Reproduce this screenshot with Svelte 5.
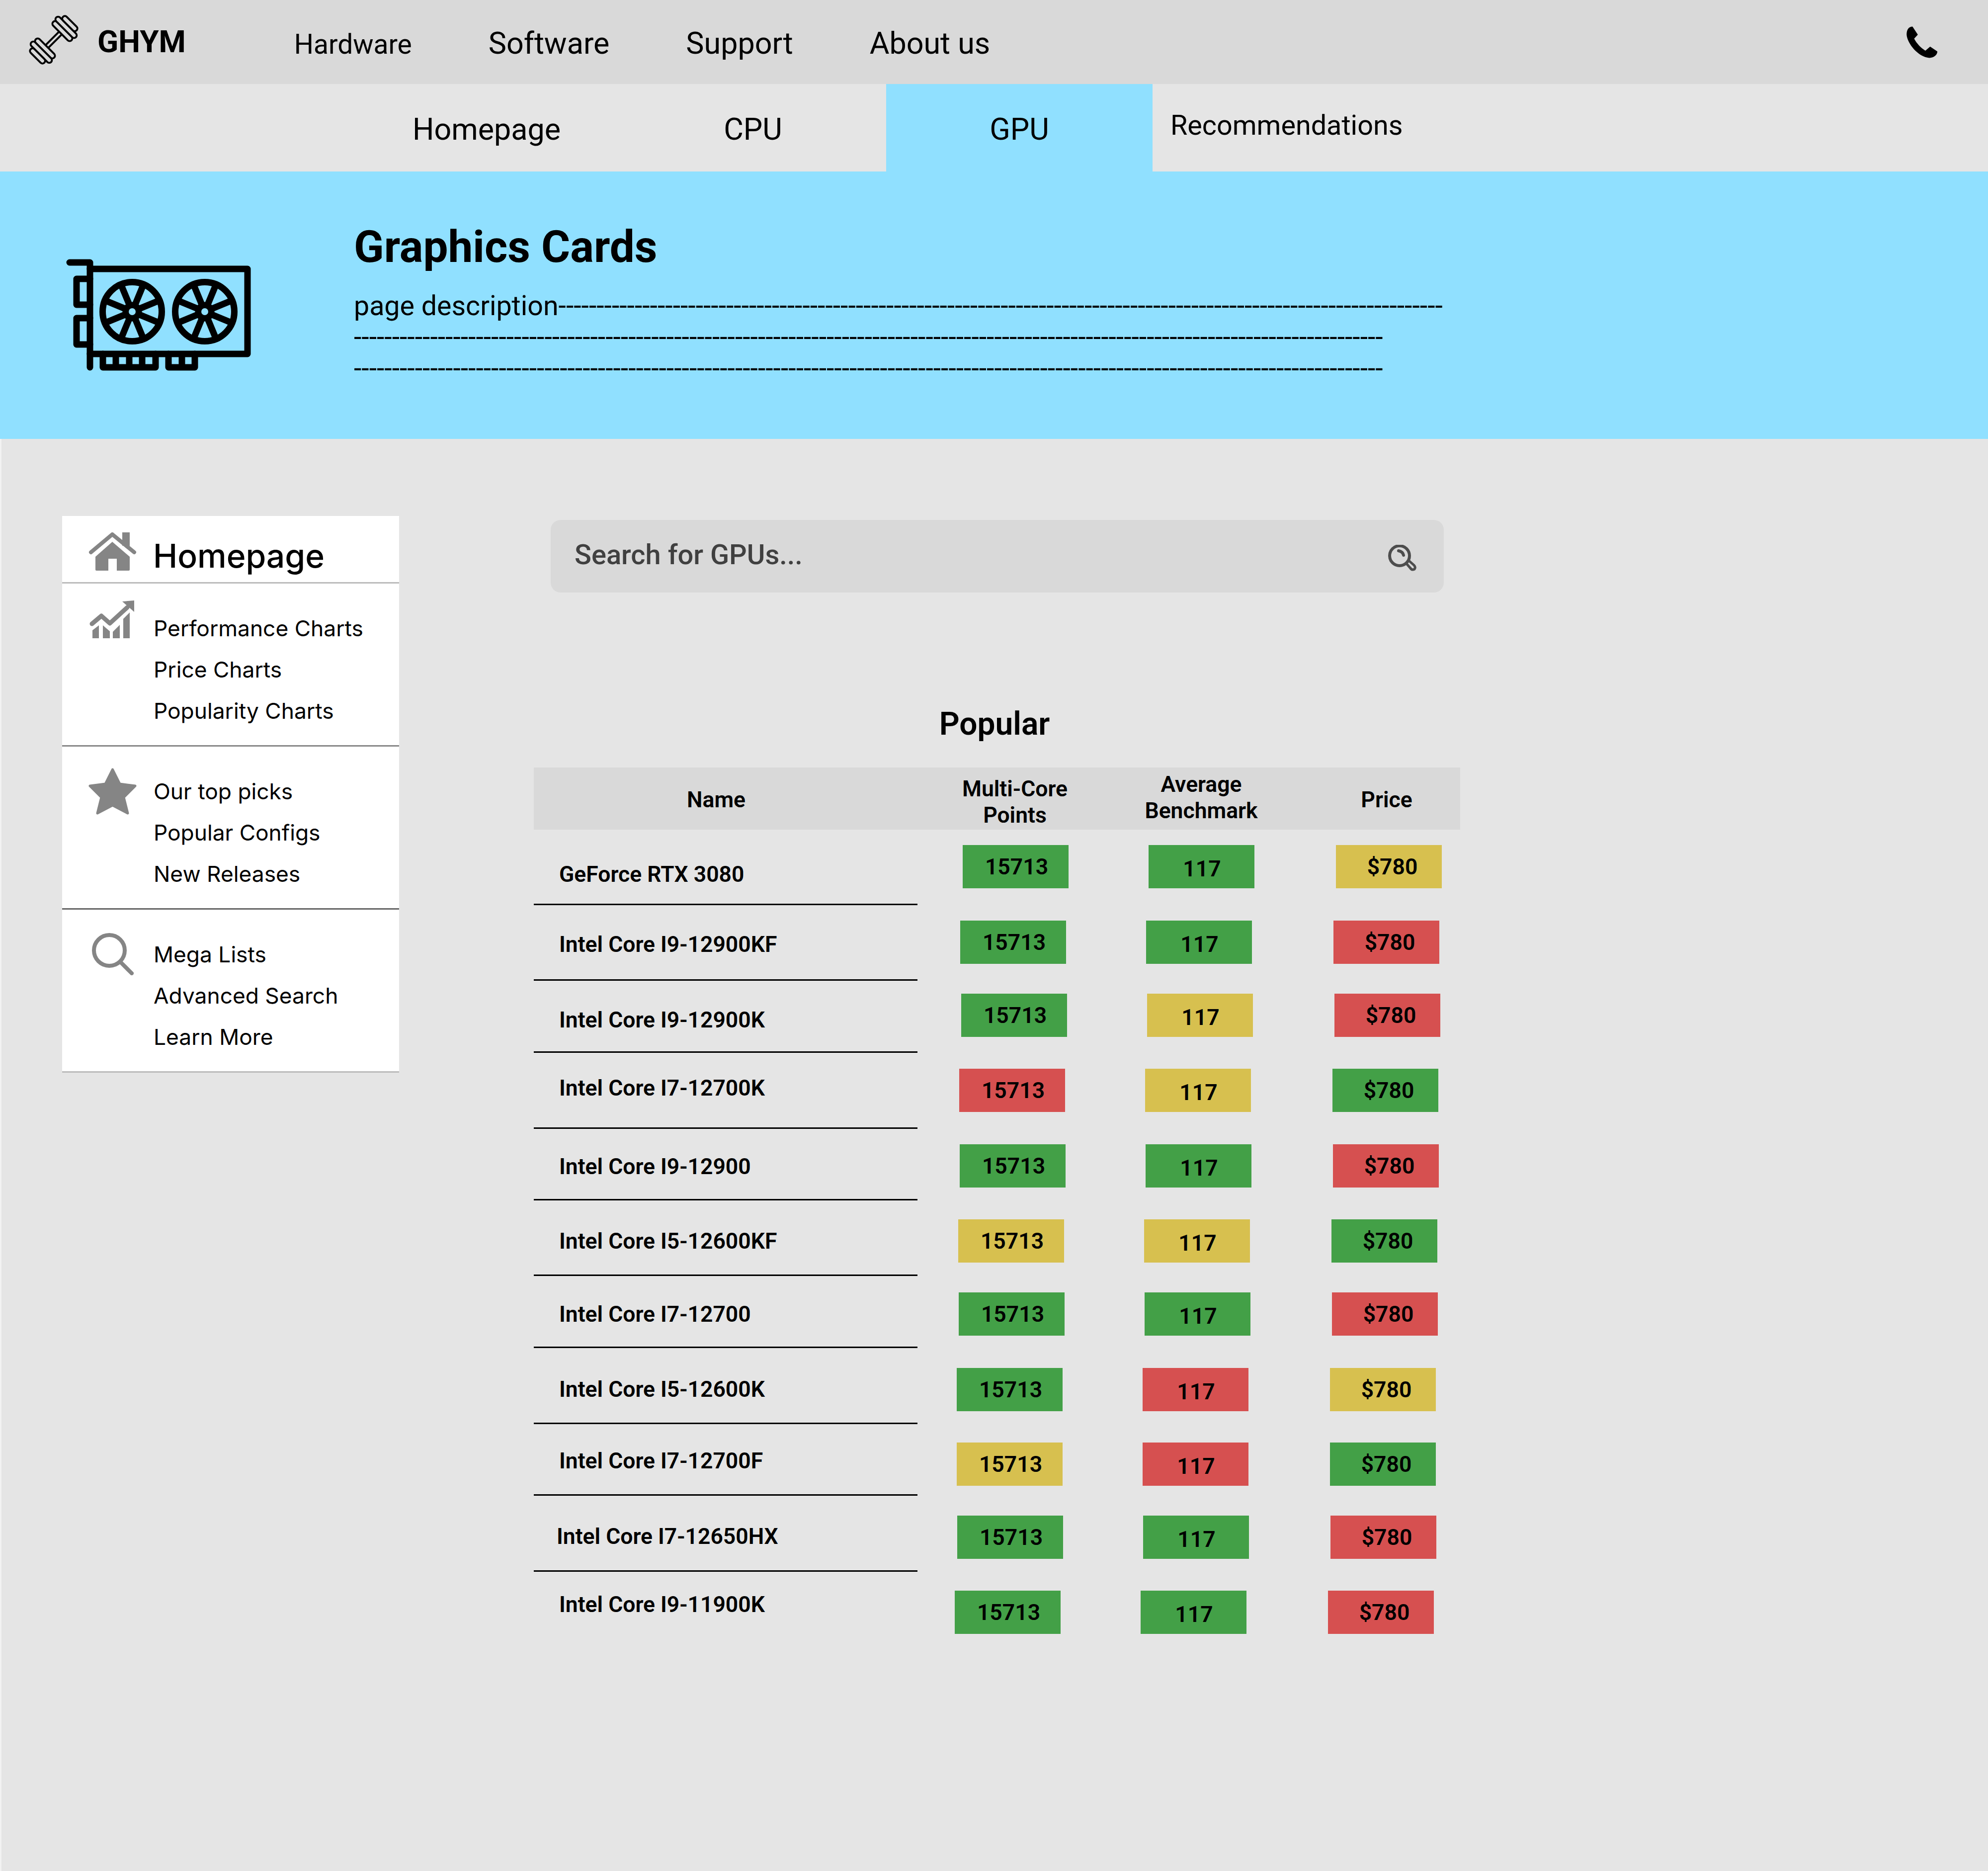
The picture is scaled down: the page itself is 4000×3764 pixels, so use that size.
<script>
	const links = ['Hardware', 'Software', 'Support', 'About us'];
	const tabs = ['Homepage', 'CPU', 'GPU'];
	const spokes = [22.5, 67.5, 112.5, 157.5, 202.5, 247.5, 292.5, 337.5];
	const plates = [
		[21, 54],
		[32, 58],
		[43, 40]
	];

	// h: row height, top: chip offset, y: name offset, dx: first chip offset
	const rows = [
		{ name: 'GeForce RTX 3080', h: 152, top: 31, y: 60, dx: 91, c: ['g', 'g', 'y'] },
		{ name: 'Intel Core I9-12900KF', h: 152, top: 31, y: 49, dx: 86, c: ['g', 'g', 'r'] },
		{ name: 'Intel Core I9-12900K', h: 145, top: 26, y: 49, dx: 88, c: ['g', 'y', 'r'] },
		{ name: 'Intel Core I7-12700K', h: 153, top: 32, y: 41, dx: 84, c: ['r', 'y', 'g'] },
		{ name: 'Intel Core I9-12900', h: 144, top: 31, y: 46, dx: 85, c: ['g', 'g', 'r'] },
		{ name: 'Intel Core I5-12600KF', h: 152, top: 38, y: 52, dx: 82, c: ['y', 'y', 'g'] },
		{ name: 'Intel Core I7-12700', h: 145, top: 33, y: 47, dx: 83, c: ['g', 'g', 'r'] },
		{ name: 'Intel Core I5-12600K', h: 153, top: 40, y: 53, dx: 79, c: ['g', 'r', 'y'] },
		{ name: 'Intel Core I7-12700F', h: 144, top: 37, y: 44, dx: 79, c: ['y', 'r', 'g'] },
		{ name: 'Intel Core I7-12650HX', h: 153, top: 40, y: 52, dx: 80, x: 46, c: ['g', 'g', 'r'] },
		{ name: 'Intel Core I9-11900K', h: 130, top: 38, y: 36, dx: 75, c: ['g', 'g', 'r'], last: true }
	];
	const values = ['15713', '117', '$780'];
	const dashes = (n) => '-'.repeat(n);
</script>

<div class="page">
	<header class="nav">
		<svg class="logo" viewBox="-60 -60 120 120" width="116" height="116">
			<g transform="rotate(-45)" fill="#d9d9d9" stroke="#000" stroke-width="4">
				<rect x="-22" y="-4" width="44" height="8" />
				{#each plates as [x, len]}
					<rect x={x - 1} y={-len / 2} width="11" height={len} rx="5.5" />
					<rect x={-x - 10} y={-len / 2} width="11" height={len} rx="5.5" />
				{/each}
			</g>
		</svg>
		<div class="brand">GHYM</div>
		<nav class="links">
			{#each links as link}
				<a href="#top" class:small={link === 'Hardware'}>{link}</a>
			{/each}
		</nav>
		<svg class="phone" viewBox="405 150 200 205" width="65" height="66">
			<path d="M445 155C420 155 408 175 408 205C412 260 480 345 550 350C580 350 600 330 600 310L555 280L525 305C500 290 470 260 455 230L478 205Z" fill="#000" />
		</svg>
	</header>

	<div class="subnav">
		{#each tabs as tab}
			<a href="#top" class="tab" class:active={tab === 'GPU'}>{tab}</a>
		{/each}
		<a href="#top" class="tab-rec">Recommendations</a>
	</div>

	<section class="hero">
		<svg class="gpu" viewBox="0 0 500 320" width="500" height="320" fill="none" stroke="#000" stroke-width="13" stroke-linecap="round" stroke-linejoin="round">
			<path d="M60 68H101V279" />
			<path d="M101 81H418V252H101" />
			<path d="M101 101H74V153H101M101 180H74V233H101" />
			<path d="M127 252V279H233V252M259 252V279H312V252" />
			<path d="M153 252V279M180 252V279M206 252V279M286 252V279" stroke-linecap="butt" />
			{#each [186, 332] as cx}
				<circle {cx} cy="167" r="59.5" />
				{#each spokes as a}
					<line x1={cx} y1="167" x2={cx} y2="108" transform="rotate({a} {cx} 167)" stroke-linecap="butt" />
				{/each}
				<circle {cx} cy="167" r="13" />
				<circle {cx} cy="167" r="7" fill="#90e0ff" stroke="none" />
			{/each}
		</svg>
		<div class="hero-text">
			<h1>Graphics Cards</h1>
			<p>page description{dashes(116)}<br />{dashes(135)}<br />{dashes(135)}</p>
		</div>
	</section>

	<main class="main">
		<aside class="sidebar">
			<div class="side-head">
				<svg class="side-icon" viewBox="0 0 97 77" width="97" height="77">
					<path d="M5 40L48 4L92 40" fill="none" stroke="#858585" stroke-width="8" stroke-linecap="round" stroke-linejoin="round" />
					<path d="M68 0H83V27H68Z" fill="#858585" />
					<path d="M14 49L48 19L83 49V75Q83 77 81 77H57V53H40V77H16Q14 77 14 75Z" fill="#858585" />
				</svg>
				<span>Homepage</span>
			</div>
			<div class="side-section">
				<svg class="side-icon chart" viewBox="0 0 90 76" width="90" height="76">
					<path d="M5 47L24 31L41 46L76 14" fill="none" stroke="#858585" stroke-width="9" stroke-linecap="round" stroke-linejoin="round" />
					<path d="M66 2L90 0V23Z" fill="#858585" />
					<path d="M6 60L19 50V76H6ZM27 50L41 62V76H27ZM47 63L61 49V76H47ZM68 37L81 24V76H68Z" fill="#858585" />
				</svg>
				<ul>
					<li>Performance Charts</li>
					<li>Price Charts</li>
					<li>Popularity Charts</li>
				</ul>
			</div>
			<div class="side-section dark">
				<svg class="side-icon star" viewBox="0 0 97 94" width="97" height="94">
					<path d="M48.500 3L63 32L94 36L71 59L79 91L48.500 75L18 91L26 59L3 36L34 32Z" fill="#858585" stroke="#858585" stroke-width="5" stroke-linejoin="round" />
				</svg>
				<ul>
					<li>Our top picks</li>
					<li>Popular Configs</li>
					<li>New Releases</li>
				</ul>
			</div>
			<div class="side-section dark last">
				<svg class="side-icon glass" viewBox="0 0 84 85" width="84" height="85" fill="none" stroke="#858585" stroke-width="8" stroke-linecap="round">
					<circle cx="35" cy="35" r="31" />
					<path d="M57 58L80 81" />
				</svg>
				<ul>
					<li>Mega Lists</li>
					<li>Advanced Search</li>
					<li>Learn More</li>
				</ul>
			</div>
		</aside>

		<div class="content">
			<div class="search">
				<span>Search for GPUs...</span>
				<svg viewBox="0 0 57 57" width="57" height="57" fill="none" stroke="#4d4d4d" stroke-width="6" stroke-linecap="round">
					<circle cx="23" cy="22" r="20" />
					<path d="M21 12C26 13 30 16 31 21" />
					<path d="M37 38L44 46Q48 52 53 49Q56 45 52 41L43 33" stroke-width="5" />
				</svg>
			</div>

			<h2>Popular</h2>

			<div class="table-head">
				<div class="th-name">Name</div>
				<div class="th-low">Multi-Core<br />Points</div>
				<div class="th-high">Average<br />Benchmark</div>
				<div class="th-name">Price</div>
			</div>

			{#each rows as row}
				<div class="row" style="height:{row.h}px;--chip-top:{row.top}px;--name-y:{row.y}px;--name-x:{row.x ?? 51}px;--dx:{row.dx}px">
					<div class="name" class:last={row.last}>{row.name}</div>
					{#each row.c as color, i}
						<div class="chip {color} col{i}">{values[i]}</div>
					{/each}
				</div>
			{/each}
		</div>
	</main>
</div>

<style>
	:global(body) {
		margin: 0;
		background: #e5e5e5;
	}
	.page {
		width: 4000px;
		height: 3764px;
		font-family: Roboto, 'Liberation Sans', sans-serif;
		color: #000;
		overflow: hidden;
	}
	a {
		color: inherit;
		text-decoration: none;
	}

	/* top nav */
	.nav {
		height: 169px;
		background: #d9d9d9;
		display: flex;
		align-items: center;
		padding-left: 50px;
		padding-right: 100px;
	}
	.logo {
		margin-top: -10px;
		flex: none;
	}
	.brand {
		margin-left: 30px;
		margin-top: -2px;
		font-size: 62px;
		font-weight: 700;
	}
	.links {
		display: flex;
		align-items: baseline;
		gap: 154px;
		margin-left: 218px;
		font-size: 61px;
		margin-top: 4px;
	}
	.links .small {
		font-size: 55px;
	}
	.phone {
		margin-left: auto;
		margin-top: 0;
	}

	/* second nav */
	.subnav {
		height: 176px;
		background: #e5e5e5;
		display: flex;
		padding-left: 711px;
	}
	.tab {
		width: 536px;
		display: flex;
		align-items: center;
		justify-content: center;
		font-size: 61px;
		padding-top: 6px;
		box-sizing: border-box;
	}
	.tab.active {
		background: #90e0ff;
	}
	.tab-rec {
		padding-left: 36px;
		font-size: 55.700px;
		line-height: 166px;
	}

	/* hero */
	.hero {
		height: 538px;
		background: #90e0ff;
		display: flex;
		padding-left: 80px;
	}
	.gpu {
		margin-top: 115px;
		flex: none;
	}
	.hero-text {
		margin-left: 132px;
	}
	h1 {
		margin: 97px 0 0;
		font-size: 89px;
		line-height: 110px;
		font-weight: 700;
	}
	.hero-text p {
		margin: 32px 0 0;
		font-size: 55.500px;
		line-height: 63px;
		white-space: nowrap;
	}

	/* sidebar */
	.main {
		display: flex;
		align-items: flex-start;
		padding: 155px 0 0 122px;
		border-left: 3px solid #f2f2f2;
		height: 2881px;
		box-sizing: border-box;
	}
	.sidebar {
		width: 678px;
		background: #fff;
		border-bottom: 3px solid #bbb;
		flex: none;
		font-family: Inter, 'Liberation Sans', sans-serif;
	}
	.side-head {
		height: 133px;
		border-bottom: 3px solid #bbb;
		display: flex;
		align-items: flex-start;
		font-size: 66px;
		font-weight: 500;
		line-height: 160px;
	}
	.side-head span {
		margin-left: 33px;
	}
	.side-icon {
		margin: 33px 0 0 53px;
		flex: none;
	}
	.side-section {
		height: 325px;
		border-bottom: 3px solid #888;
		display: flex;
		position: relative;
	}
	.side-section.last {
		border-bottom: 0;
	}
	.side-section.dark {
		border-color: #666;
	}
	.chart {
		margin: 34px 0 0 55px;
	}
	.star {
		margin: 43px 0 0 53px;
	}
	.glass {
		margin: 47px 0 0 60px;
	}
	.side-section ul {
		list-style: none;
		margin: 0;
		padding: 49px 0 0;
		position: absolute;
		left: 184px;
		font-size: 44.300px;
		line-height: 83px;
	}

	/* content */
	.content {
		margin-left: 271px;
		width: 1864px;
	}
	.search {
		margin: 8px 0 0 34px;
		width: 1797px;
		height: 146px;
		background: #d9d9d9;
		border-radius: 20px;
		box-sizing: border-box;
		padding: 0 55px 0 48px;
		display: flex;
		align-items: center;
		justify-content: space-between;
		color: #404040;
		font-size: 56px;
		font-weight: 500;
	}
	.search span {
		margin-top: -6px;
	}
	.search svg {
		margin-top: 11px;
	}
	h2 {
		margin: 225px 10px 0 0;
		font-size: 64px;
		line-height: 80px;
		font-weight: 600;
		text-align: center;
	}
	.table-head {
		margin-top: 47px;
		height: 125px;
		background: #d9d9d9;
		display: grid;
		grid-template-columns: 738px 290px 290px 290px;
		column-gap: 85px;
		align-items: center;
		text-align: center;
		font-size: 44.500px;
		font-weight: 600;
		line-height: 53px;
	}
	.th-name {
		margin-top: 5px;
		padding-right: 4px;
	}
	.th-low {
		margin-top: 14px;
	}
	.th-high {
		margin-top: -3px;
	}

	/* rows */
	.row {
		display: flex;
		align-items: flex-start;
		font-size: 44.500px;
		font-weight: 600;
	}
	.name {
		width: 772px;
		height: 100%;
		box-sizing: border-box;
		border-bottom: 3px solid #000;
		padding: var(--name-y) 0 0 var(--name-x);
		line-height: 60px;
		flex: none;
	}
	.name.last {
		border-bottom: 0;
	}
	.chip {
		width: 213px;
		height: 87px;
		margin-top: var(--chip-top);
		display: flex;
		align-items: center;
		justify-content: center;
		flex: none;
		box-sizing: border-box;
	}
	.col0 {
		margin-left: var(--dx);
		padding: 0 0 0 4px;
	}
	.col1 {
		margin-left: 161px;
		padding: 8px 0 0 2px;
	}
	.col2 {
		margin-left: 164px;
		padding: 0 0 0 14px;
	}
	.g {
		background: #43a047;
	}
	.y {
		background: #d7c04f;
	}
	.r {
		background: #d65050;
	}
</style>
